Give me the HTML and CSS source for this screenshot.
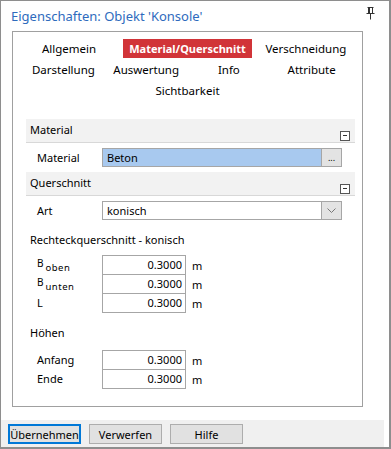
FILE: index.html
```html
<!DOCTYPE html>
<html lang="de">
<head>
  <meta charset="UTF-8" />
  <title>Eigenschaften</title>
  <link rel="stylesheet" href="styles.css">
</head>
<body>
  <div class="window">
    <div class="titlebar">
      <span class="title">Eigenschaften: Objekt 'Konsole'</span>
      <svg class="pin" width="9" height="13" viewBox="0 0 9 13">
        <path d="M1.5 0.5h6M2.5 0.5v6M6.5 0.5v6M0.5 6.5h8M4.5 6.5v6" stroke="#333" stroke-width="1" fill="none" />
        <path d="M3 1h1v5h-1z" fill="#333" />
      </svg>
    </div>

    <div class="panel">
      <div class="tabs">
        <div class="tab-row row-three">
          <span class="tab"><span class="tab-label">Allgemein</span></span>
          <span class="tab"><span class="tab-label active">Material/Querschnitt</span></span>
          <span class="tab"><span class="tab-label">Verschneidung</span></span>
        </div>
        <div class="tab-row row-four">
          <span class="tab"><span class="tab-label">Darstellung</span></span>
          <span class="tab"><span class="tab-label">Auswertung</span></span>
          <span class="tab"><span class="tab-label">Info</span></span>
          <span class="tab"><span class="tab-label">Attribute</span></span>
        </div>
        <div class="tab-row">
          <span class="tab"><span class="tab-label">Sichtbarkeit</span></span>
        </div>
      </div>

      <div class="props">
        <div class="group-head">
          <span>Material</span>
          <span class="collapse"></span>
        </div>
        <div class="prop-row">
          <span class="label">Material</span>
          <div class="field field-wide selected">
            <span class="field-text">Beton</span>
            <span class="field-btn dots">...</span>
          </div>
        </div>

        <div class="group-head">
          <span>Querschnitt</span>
          <span class="collapse"></span>
        </div>
        <div class="prop-row">
          <span class="label">Art</span>
          <div class="field field-wide">
            <span class="field-text">konisch</span>
            <span class="field-btn">
              <svg width="9" height="5" viewBox="0 0 9 5"><path d="M0.5 0.5l4 4 4-4" stroke="#777" fill="none" /></svg>
            </span>
          </div>
        </div>

        <div class="sub-head">Rechteckquerschnitt - konisch</div>
        <div class="num-group">
          <div class="num-row">
            <span class="label"><span class="sym">B</span><sub>oben</sub></span>
            <span class="num">0.3000</span>
            <span class="unit">m</span>
          </div>
          <div class="num-row">
            <span class="label"><span class="sym">B</span><sub>unten</sub></span>
            <span class="num">0.3000</span>
            <span class="unit">m</span>
          </div>
          <div class="num-row">
            <span class="label">L</span>
            <span class="num">0.3000</span>
            <span class="unit">m</span>
          </div>
        </div>

        <div class="sub-head">Höhen</div>
        <div class="num-group loose">
          <div class="num-row">
            <span class="label">Anfang</span>
            <span class="num">0.3000</span>
            <span class="unit">m</span>
          </div>
          <div class="num-row">
            <span class="label">Ende</span>
            <span class="num">0.3000</span>
            <span class="unit">m</span>
          </div>
        </div>
      </div>
    </div>

    <div class="button-bar">
      <button class="default">Übernehmen</button>
      <button>Verwerfen</button>
      <button>Hilfe</button>
    </div>
  </div>
</body>
</html>
```

FILE: styles.css
```css
body {
  margin: 0;
  font-family: 'Noto Sans', 'Open Sans', sans-serif;
  font-size: 11px;
  color: #000;
  background: #fff;
}

.window {
  width: 391px;
  height: 449px;
  box-sizing: border-box;
  border: 1px solid #8e8e8e;
  border-right-width: 2px;
  border-bottom-width: 2px;
  display: flex;
  flex-direction: column;
  background: #fff;
}

.titlebar {
  height: 30px;
  display: flex;
  align-items: center;
  justify-content: space-between;
  padding: 0 14px 0 10px;
}

.title {
  color: #2e6bbd;
  font-size: 13px;
}

.pin {
  margin-top: -4px;
}

.panel {
  margin-left: 11px;
  width: 351px;
  height: 377px;
  box-sizing: border-box;
  border: 1px solid #a0a0a0;
}

.tabs {
  padding-top: 6px;
  font-size: 11.5px;
}

.tab-row {
  display: flex;
  height: 21px;
  align-items: center;
}

.row-three {
  padding: 0 2px;
}

.row-four {
  padding: 0 9px;
}

.tab {
  flex: 1;
  text-align: center;
}

.tab-label {
  display: inline-block;
  padding: 0 6px;
  line-height: 19px;
}

.tab-label.active {
  background: #d13438;
  color: #fff;
  font-weight: bold;
  font-size: 11px;
}

.props {
  margin: 18px 7px 0 13px;
}

.group-head {
  height: 23px;
  background: #f2f2f2;
  border-bottom: 1px solid #d8d8d8;
  display: flex;
  justify-content: space-between;
  padding: 0 4px;
  line-height: 22px;
  margin-bottom: 5px;
}

.collapse {
  width: 8px;
  height: 8px;
  border: 1px solid #555;
  margin-top: 12px;
  margin-right: 1px;
  position: relative;
  background: #fff;
}

.collapse::after {
  content: "";
  position: absolute;
  left: 2px;
  right: 2px;
  top: 3px;
  height: 1px;
  background: #333;
}

.prop-row {
  display: flex;
  align-items: center;
  height: 19px;
  margin-bottom: 5px;
}

.label {
  width: 65px;
  padding-left: 11px;
  flex-shrink: 0;
}

.field {
  height: 19px;
  box-sizing: border-box;
  border: 1px solid #a6a6a6;
  display: flex;
}

.field-wide {
  width: 240px;
}

.field.selected {
  background: #a8c9ef;
}

.field-text {
  flex: 1;
  padding-left: 4px;
  line-height: 17px;
}

.field-btn {
  width: 19px;
  background: #e3e3e3;
  border-left: 1px solid #a6a6a6;
  display: flex;
  align-items: center;
  justify-content: center;
}

.dots {
  font-size: 9px;
  line-height: 17px;
  align-items: flex-start;
}

.sub-head {
  padding-left: 4px;
  margin-top: 11px;
  height: 18px;
  line-height: 18px;
}

.num-group {
  margin-top: 7px;
}

.num-group.loose {
  margin-top: 9px;
}

.num-row {
  display: flex;
  align-items: center;
  height: 19px;
}

.num-row .label {
  line-height: 18px;
}

.sym {
  font-size: 10px;
}

.num-row sub {
  font-size: 9.5px;
  vertical-align: -4px;
  margin-left: 2px;
  letter-spacing: 0.5px;
}

.num {
  width: 84px;
  height: 20px;
  box-sizing: border-box;
  border: 1px solid #a6a6a6;
  text-align: right;
  padding-right: 3px;
  line-height: 18px;
}

.unit {
  padding-left: 6px;
}

.button-bar {
  margin-top: 13px;
  height: 27px;
  width: 383px;
  background: #f0f0f0;
  display: flex;
  gap: 8px;
  padding: 4px 0 0 7px;
  box-sizing: border-box;
}

button {
  width: 73px;
  height: 20px;
  background: #e1e1e1;
  border: 1px solid #adadad;
  font-family: inherit;
  font-size: 11px;
  padding: 0;
  color: #000;
}

button.default {
  border: 2px solid #0078d7;
}
```
